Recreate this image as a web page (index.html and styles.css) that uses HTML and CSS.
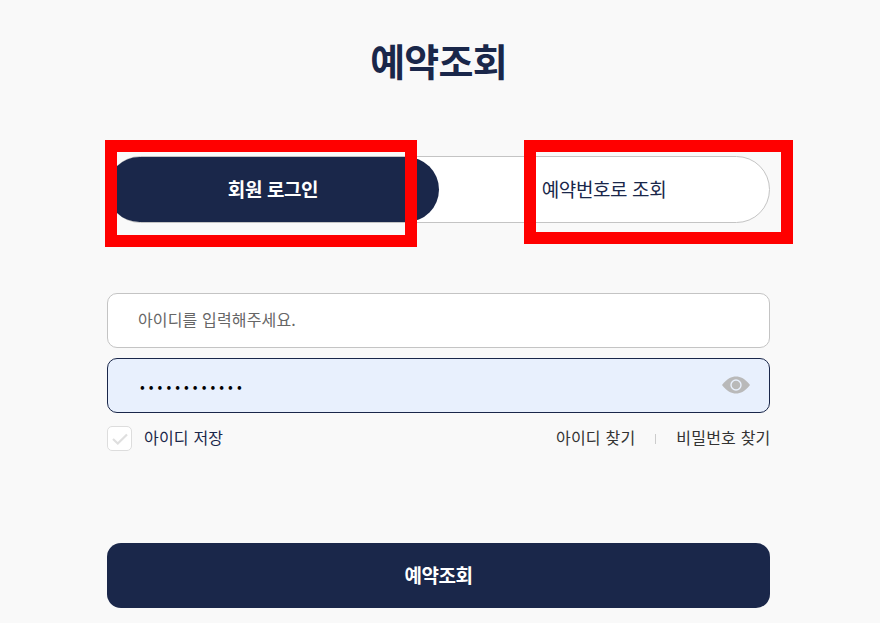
FILE: index.html
```html
<!DOCTYPE html>
<html lang="ko">
<head>
    <meta charset="UTF-8">
    <meta name="viewport" content="width=device-width, initial-scale=1.0">
    <title>예약조회</title>
    <link rel="stylesheet" href="styles.css">
</head>
<body>

    <div class="page">
        <h1 class="title">예약조회</h1>

        <!-- Tabs -->
        <div class="tabs">
            <a href="#member" class="tab active">회원 로그인</a>
            <a href="#number" class="tab">예약번호로 조회</a>
        </div>

        <!-- Login form -->
        <form class="login-form">
            <input class="field" type="text" placeholder="아이디를 입력해주세요.">
            <div class="password-row">
                <input class="field filled" type="password" value="abcdefghijkl">
                <svg class="eye" viewBox="0 0 28 18" width="28" height="18" aria-hidden="true">
                    <path d="M0 9C5 2.500 9.500 .5 14 .5S23 2.500 28 9c-5 6.500-9.500 8.500-14 8.500S5 15.500 0 9z" fill="#b9b9b9"/>
                    <circle cx="14" cy="9" r="5" fill="none" stroke="#e8f0fd" stroke-width="1.400"/>
                </svg>
            </div>

            <div class="options">
                <label class="save-id">
                    <span class="checkbox">
                        <svg viewBox="0 0 16 12" width="16" height="12" aria-hidden="true">
                            <path d="M1 6 5.800 10.500 15 1.500" fill="none" stroke="#dfdfdf" stroke-width="2.200"/>
                        </svg>
                    </span>
                    <span class="option-text">아이디 저장</span>
                </label>
                <div class="find-links">
                    <a href="#id" class="option-text">아이디 찾기</a>
                    <span class="divider"></span>
                    <a href="#pw" class="option-text">비밀번호 찾기</a>
                </div>
            </div>

            <button class="submit" type="button">예약조회</button>
        </form>
    </div>

    <!-- Red annotation boxes -->
    <div class="mark mark-left"></div>
    <div class="mark mark-right"></div>

</body>
</html>
```

FILE: styles.css
```css
/* General Styles */
* {
    margin: 0;
    padding: 0;
    box-sizing: border-box;
    font-family: "Noto Sans CJK KR", "Noto Sans", sans-serif;
}
body {
    background-color: #f9f9f9;
    color: #1a274a;
    overflow: hidden;
}
a {
    color: inherit;
    text-decoration: none;
}
.page {
    width: 663px;
    margin-left: 107px;
    padding-top: 34px;
}

/* Title */
.title {
    height: 54px;
    font-size: 38px;
    line-height: 52px;
    font-weight: 700;
    letter-spacing: -0.8px;
    text-align: center;
}

/* Tabs */
.tabs {
    display: flex;
    height: 67px;
    margin-top: 68px;
    background: #fff;
    border: 1px solid #c4c4c4;
    border-radius: 34px;
}
.tab {
    flex: 1;
    display: flex;
    justify-content: center;
    align-items: center;
    padding-bottom: 3px;
    font-size: 19px;
    letter-spacing: -0.4px;
}
.tab.active {
    flex: 0 0 332px;
    margin-left: -1px;
    background: #1a274a;
    color: #fff;
    font-weight: 700;
    border-radius: 34px;
}

/* Form */
.login-form {
    margin-top: 70px;
}
.field {
    display: block;
    width: 100%;
    height: 55px;
    padding: 0 30px 3px;
    background: #fff;
    border: 1px solid #c4c4c4;
    border-radius: 10px;
    font-size: 16px;
    letter-spacing: 0.15px;
    color: #1a274a;
    outline: none;
}
.field::placeholder {
    color: #666;
}
.field.filled {
    padding: 0 30px 0 32px;
    background: #e8f0fd;
    border-color: #1a274a;
    color: #000;
    font-size: 14px;
    letter-spacing: 4.050px;
}
.password-row {
    position: relative;
    margin-top: 10px;
}
.eye {
    position: absolute;
    top: 18px;
    right: 20px;
}

/* Options row */
.options {
    display: flex;
    justify-content: space-between;
    align-items: center;
    height: 25px;
    margin-top: 13px;
    font-size: 16px;
    color: #333;
}
.option-text {
    padding-bottom: 3px;
    line-height: 20px;
    letter-spacing: 0.2px;
}
.save-id {
    display: flex;
    align-items: center;
    gap: 12px;
    color: #1a274a;
}
.checkbox {
    display: flex;
    justify-content: center;
    align-items: center;
    width: 25px;
    height: 25px;
    background: #fff;
    border: 1px solid #ddd;
    border-radius: 5px;
}
.find-links {
    display: flex;
    align-items: center;
    gap: 20px;
    margin-right: -0.5px;
}
.divider {
    width: 1px;
    height: 10px;
    background: #ccc;
}

/* Submit */
.submit {
    display: block;
    width: 100%;
    height: 65px;
    margin-top: 92px;
    padding-bottom: 3px;
    background: #1a274a;
    color: #fff;
    border: none;
    border-radius: 14px;
    font-size: 19px;
    font-weight: 700;
    letter-spacing: -0.5px;
}

/* Red annotation boxes */
.mark {
    position: absolute;
    border: 12px solid #ff0000;
}
.mark-left {
    left: 105px;
    top: 140px;
    width: 312px;
    height: 107px;
}
.mark-right {
    left: 524px;
    top: 140px;
    width: 269px;
    height: 104px;
}
```
